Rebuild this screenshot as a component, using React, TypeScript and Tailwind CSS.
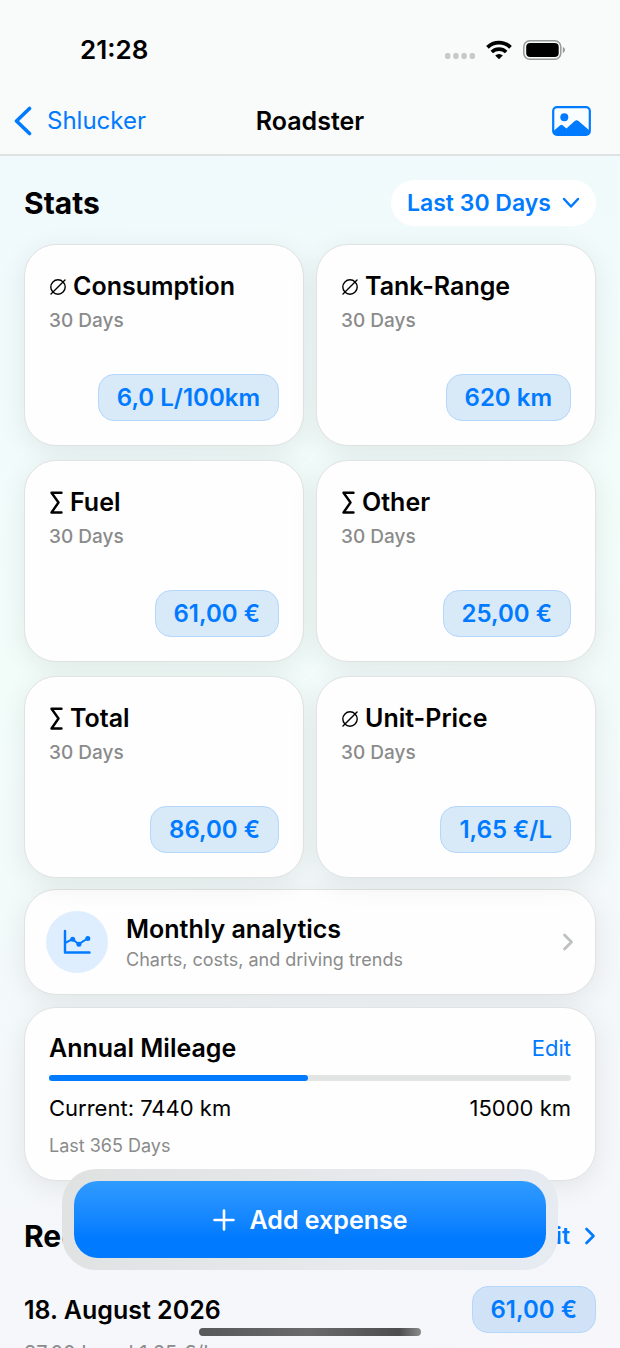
import { useState } from "react";

const STATS = [
  { sign: "avg", title: "Consumption", value: "6,0 L/100km" },
  { sign: "avg", title: "Tank-Range", value: "620 km" },
  { sign: "sum", title: "Fuel", value: "61,00 €" },
  { sign: "sum", title: "Other", value: "25,00 €" },
  { sign: "sum", title: "Total", value: "86,00 €" },
  { sign: "avg", title: "Unit-Price", value: "1,65 €/L" },
];

const MILEAGE = { current: 7440, goal: 15000 };

const CARD = "rounded-[32px] border border-[#dfe3e2] bg-[#fefefe] shadow-[0_6px_28px_rgba(0,0,0,0.08)]";

function Sign({ kind }: { kind: string }) {
  if (kind === "avg") {
    return (
      <svg width="18" height="18" viewBox="0 0 18 18" fill="none" stroke="currentColor" strokeWidth="1.4" strokeLinecap="round" className="mt-[2px]" aria-hidden="true">
        <circle cx="9" cy="9" r="7.2" />
        <path d="M2 16 16 2" />
      </svg>
    );
  }
  return (
    <svg width="15" height="24" viewBox="0 0 15 24" fill="none" stroke="currentColor" strokeWidth="2.4" strokeLinecap="round" strokeLinejoin="round" className="mt-[2px]" aria-hidden="true">
      <path d="M12.500 1.800H2.500L9.500 11.500 2.500 21.500H12.500" />
    </svg>
  );
}

function Value({ children }: { children: string }) {
  return (
    <span className="rounded-[16px] border border-[#b4d7fd] bg-[#006fd8]/15 px-[18px] py-2 text-[24px] leading-[29px] font-semibold text-[#007aff]">
      {children}
    </span>
  );
}

function StatusBar() {
  return (
    <div className="flex items-center justify-between pt-8 pr-[54px] pl-20">
      <span className="text-[26px] leading-9 font-semibold">21:28</span>
      <div className="flex items-center gap-[11px]">
        <svg width="30" height="6" viewBox="0 0 30 6" fill="#c6c9c8" className="mt-3" aria-hidden="true">
          <rect x="0" width="5.400" height="6" rx="2" />
          <rect x="8.200" width="5.400" height="6" rx="2" />
          <rect x="16.400" width="5.400" height="6" rx="2" />
          <rect x="24.600" width="5.400" height="6" rx="2" />
        </svg>
        <svg width="26" height="20" viewBox="0 0 26 20" fill="none" stroke="#000" aria-hidden="true">
          <path d="M1.500 7.300a16.500 16.500 0 0 1 23 0" strokeWidth="3.800" />
          <path d="M5.800 12a10.500 10.500 0 0 1 14.400 0" strokeWidth="3.600" />
          <path d="M13 19.200 9.200 15.600a5.500 5.500 0 0 1 7.600 0Z" fill="#000" stroke="none" />
        </svg>
        <svg width="43" height="20" viewBox="0 0 43 20" aria-hidden="true">
          <rect x="0.800" y="0.800" width="37" height="18.400" rx="6" fill="none" stroke="#979a99" strokeWidth="1.500" />
          <rect x="3.200" y="3" width="32.500" height="14" rx="4" fill="#000" />
          <path d="M39.800 7v6c1.300-.4 2.200-1.600 2.200-3s-.9-2.600-2.200-3Z" fill="#979a99" />
        </svg>
      </div>
    </div>
  );
}

function NavBar() {
  return (
    <nav className="grid grid-cols-[1fr_auto_1fr] items-center px-[13px] pt-[35px] pb-[15px]">
      <a href="#garage" className="flex items-center gap-[15px] text-[24px] leading-9 text-[#007aff]">
        <svg width="19" height="30" viewBox="0 0 19 30" fill="none" stroke="currentColor" strokeWidth="3.600" strokeLinecap="round" strokeLinejoin="round" aria-hidden="true">
          <path d="M16.500 2.500 3.500 15l13 12.500" />
        </svg>
        Shlucker
      </a>
      <h1 className="text-[25px] leading-9 font-semibold">Roadster</h1>
      <button type="button" aria-label="Photo" className="mr-4 justify-self-end text-[#007aff]">
        <svg width="39" height="30" viewBox="0 0 39 30" className="block" aria-hidden="true">
          <rect x="1.200" y="1.200" width="36.600" height="27.600" rx="3.800" fill="#fafdff" stroke="currentColor" strokeWidth="2.200" />
          <circle cx="12.300" cy="11.300" r="4" fill="currentColor" />
          <path d="M1.500 25 8.200 19.200c.9-.7 1.700-.7 2.500 0l3.700 3.200 8.300-7.300c1.300-1 2.600-1 3.800 0L37.500 24.500V26c0 1.500-1 2.700-2.700 2.700H4.200c-1.700 0-2.700-1-2.700-2.700Z" fill="currentColor" />
        </svg>
      </button>
    </nav>
  );
}

export default function App() {
  const [range, setRange] = useState("Last 30 Days");
  const done = (MILEAGE.current / MILEAGE.goal) * 100;

  return (
    <div className="relative flex h-screen flex-col overflow-hidden bg-[linear-gradient(165deg,#f0f9fc_12%,#f2fdfa_45%,#f4f8fa_72%,#f6f6fb_100%)] font-['Inter','Liberation_Sans',sans-serif] text-black">
      <header className="border-b-2 border-[#dfe2e2] bg-[#f8fbfa]/90">
        <StatusBar />
        <NavBar />
      </header>

      <main className="min-h-0 flex-1 overflow-y-auto px-6 pt-6 [scrollbar-width:none]">
        <div className="flex items-center justify-between">
          <h2 className="text-[30px] leading-9 font-bold">Stats</h2>
          <div className="relative flex items-center text-[#007aff]">
            <select
              aria-label="Period"
              value={range}
              onChange={(e) => setRange(e.target.value)}
              className="h-[46px] appearance-none rounded-full bg-white pr-[45px] pl-4 text-[23px] leading-7 font-semibold"
            >
              <option>Last 30 Days</option>
              <option>Last Year</option>
            </select>
            <svg width="18" height="12" viewBox="0 0 18 12" fill="none" stroke="currentColor" strokeWidth="2.500" strokeLinecap="round" strokeLinejoin="round" className="pointer-events-none absolute right-4" aria-hidden="true">
              <path d="m2 2 7 7.500L16 2" />
            </svg>
          </div>
        </div>

        <div className="mt-[18px] grid grid-cols-2 gap-x-3 gap-y-[14px]">
          {STATS.map((s) => (
            <section key={s.title} className={`flex h-[202px] flex-col p-6 ${CARD}`}>
              <h3 className="flex items-center gap-[6px] text-[25px] leading-[34px] font-semibold">
                <Sign kind={s.sign} />
                {s.title}
              </h3>
              <p className="mt-1 text-[19px] leading-7 font-medium text-[#8a8b8b]">30 Days</p>
              <div className="mt-auto flex justify-end">
                <Value>{s.value}</Value>
              </div>
            </section>
          ))}
        </div>

        <a href="#analytics" className={`mt-[11px] flex items-center px-[21px] py-5 ${CARD}`}>
          <span className="flex size-[62px] items-center justify-center rounded-full bg-[#dfeefe] text-[#007aff]">
            <svg width="30" height="26" viewBox="0 0 30 26" fill="none" stroke="currentColor" strokeWidth="2.400" strokeLinecap="round" strokeLinejoin="round" aria-hidden="true">
              <path d="M3 2v21.500h24.500" />
              <path d="m3 14 7.500-3.800 6.300 5L25.500 9.500" strokeWidth="2" />
              <g fill="currentColor" stroke="none">
                <circle cx="10.700" cy="10.300" r="2.500" />
                <circle cx="16.900" cy="15.300" r="2.500" />
                <circle cx="25.800" cy="9.400" r="2.500" />
              </g>
            </svg>
          </span>
          <span className="ml-[18px] flex flex-1 flex-col pt-[2px]">
            <span className="text-[25px] leading-[34px] font-semibold">Monthly analytics</span>
            <span className="text-[18px] leading-7 text-[#8a8b8b]">Charts, costs, and driving trends</span>
          </span>
          <svg width="12" height="18" viewBox="0 0 12 18" fill="none" stroke="#bfc0c1" strokeWidth="2.800" strokeLinecap="round" strokeLinejoin="round" aria-hidden="true">
            <path d="m2.500 2 7 7-7 7" />
          </svg>
        </a>

        <section className={`mt-3 px-6 pt-6 pb-5 ${CARD}`}>
          <div className="flex items-center justify-between">
            <h3 className="text-[25px] leading-8 font-semibold">Annual Mileage</h3>
            <button type="button" className="text-[22px] leading-8 text-[#007aff]">Edit</button>
          </div>
          <div role="progressbar" aria-label="Annual Mileage" aria-valuenow={MILEAGE.current} aria-valuemax={MILEAGE.goal} className="mt-[11px] h-[6px] rounded-full bg-[#e3e4e4]">
            <div className="h-full rounded-full bg-[#007aff]" style={{ width: `${done}%` }} />
          </div>
          <div className="mt-[11px] flex justify-between text-[22px] leading-8">
            <span>Current: {MILEAGE.current} km</span>
            <span>{MILEAGE.goal} km</span>
          </div>
          <p className="mt-2 text-[18px] leading-7 text-[#8a8b8b]">Last 365 Days</p>
        </section>

        <div className="mt-[35px] flex items-center justify-between">
          <h2 className="text-[30px] leading-10 font-bold">Recent</h2>
          <a href="#expenses" className="flex items-center gap-[14px] text-[23px] leading-8 font-semibold text-[#007aff]">
            Edit
            <svg width="12" height="18" viewBox="0 0 12 18" fill="none" stroke="currentColor" strokeWidth="2.600" strokeLinecap="round" strokeLinejoin="round" aria-hidden="true">
              <path d="m2.500 2 7 7-7 7" />
            </svg>
          </a>
        </div>

        <div className="mt-[30px] flex items-center justify-between">
          <h3 className="text-[25px] leading-8 font-semibold">18. August 2026</h3>
          <Value>61,00 €</Value>
        </div>
        <p className="mt-[6px] text-[20px] leading-7 text-[#8a8b8b]">37,00 L and 1,65 €/L</p>
      </main>

      <div className="absolute inset-x-[62px] bottom-[78px] rounded-[34px] bg-[linear-gradient(110deg,#dfe2e1,#e7eaec_60%,#e6ebf2)] p-3">
        <button
          type="button"
          className="flex h-[77px] w-full items-center justify-center gap-[15px] rounded-[24px] bg-linear-to-b from-[#2f9bff] to-[#007aff] to-75% text-[25px] leading-8 font-semibold text-white"
        >
          <svg width="22" height="22" viewBox="0 0 22 22" fill="none" stroke="currentColor" strokeWidth="2.600" strokeLinecap="round" aria-hidden="true">
            <path d="M11 1.500v19M1.500 11h19" />
          </svg>
          Add expense
        </button>
      </div>
      <div className="absolute bottom-3 left-1/2 h-2 w-[222px] -translate-x-1/2 rounded-full bg-[linear-gradient(90deg,#58595b,#6a6a6c_50%,#4d4d4f_90%,#8a8a8c)]" />
    </div>
  );
}
